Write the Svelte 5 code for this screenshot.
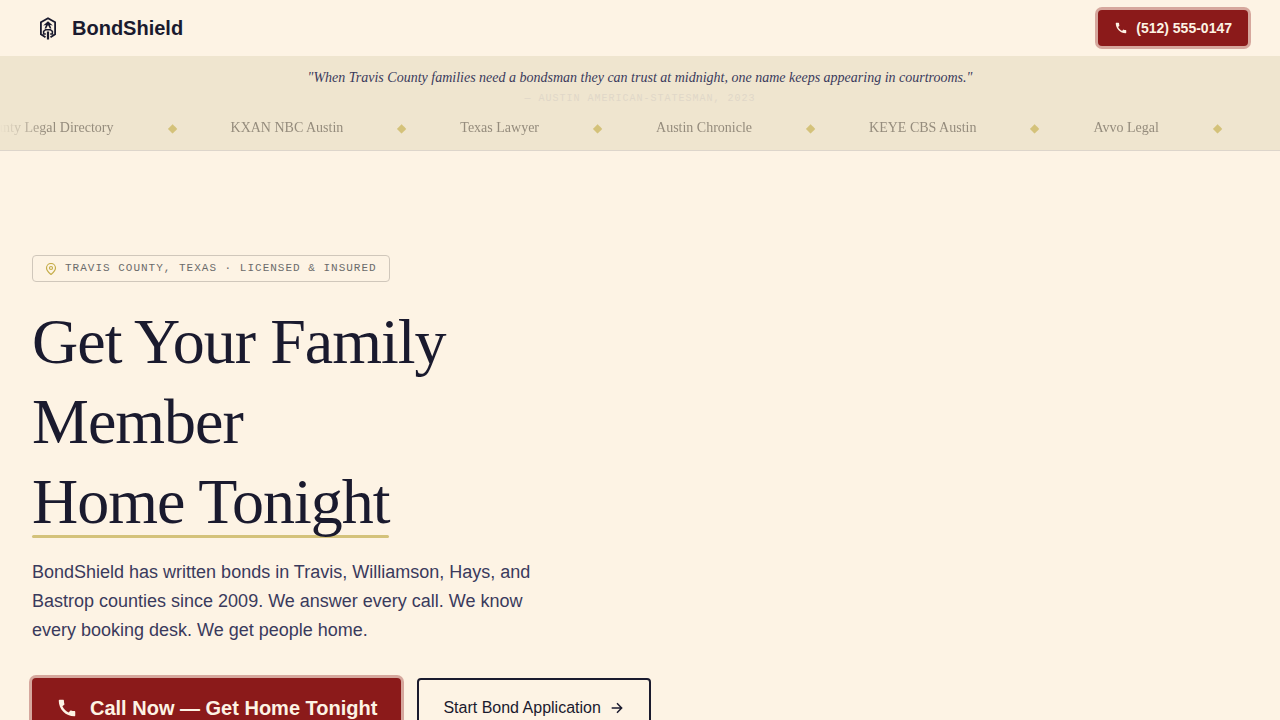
<script lang="ts">
    //#region <Content>
    const phone = '(512) 555-0147';
    const phoneHref = 'tel:+15125550147';

    const outlets = [
        'Travis County Legal Directory',
        'KXAN NBC Austin',
        'Texas Lawyer',
        'Austin Chronicle',
        'KEYE CBS Austin',
        'Avvo Legal',
    ];
    //#endregion </Content>

    // how far the press strip has scrolled, in px
    let tickerOffset = $state(59);
</script>

{#snippet phoneIcon()}
    <svg class="icon" viewBox="0 0 24 24" fill="currentColor" aria-hidden="true">
        <path d="M20.010 15.380c-1.230 0-2.420-.2-3.530-.56-.35-.12-.74-.03-1.010.24l-1.570 1.970c-2.830-1.350-5.480-3.900-6.890-6.830l1.950-1.660c.27-.28.35-.67.24-1.020-.37-1.110-.56-2.300-.56-3.530 0-.54-.45-.99-.99-.99H4.190C3.650 3 3 3.240 3 3.990 3 13.280 10.730 21 20.010 21c.71 0 .99-.63.99-1.180v-3.450c0-.54-.45-.99-.99-.99Z" />
    </svg>
{/snippet}

<!-- ######################################## -->
<!-- Header  -->
<!-- ######################################## -->
<header class="site-header">
    <a class="brand" href="/">
        <svg class="brand-icon" viewBox="0 0 24 24" fill="none" stroke="currentColor" stroke-width="1.800" aria-hidden="true">
            <path d="M9.500 21.300 4.900 18.300V6.300L12 2.200l7.100 4.100v12l-4.600 3" />
            <path d="M12 5.200 16.800 9.600 14 9l1.400 3.600h-1.600L12 9l-1.800 3.600H8.600L10 9l-2.800.6Z" fill="currentColor" stroke="none" />
            <path d="M9.800 18H7.600v-2.600l2-1.700h4.800l2 1.700V18h-2.200" stroke-width="1.500" />
            <path d="M12 15.500v8" stroke-width="2.200" />
        </svg>
        <span>BondShield</span>
    </a>
    <a class="call call-small" href={phoneHref}>
        {@render phoneIcon()}
        <span>{phone}</span>
    </a>
</header>

<!-- ######################################## -->
<!-- Press strip  -->
<!-- ######################################## -->
<section class="press" aria-label="Press">
    <blockquote>
        <p>"When Travis County families need a bondsman they can trust at midnight, one name keeps appearing in courtrooms."</p>
        <cite>— Austin American-Statesman, 2023</cite>
    </blockquote>
    <div class="ticker">
        <ul style:transform="translateX({-tickerOffset}px)">
            {#each outlets as outlet}
                <li>{outlet}</li>
                <li class="diamond" aria-hidden="true">◆</li>
            {/each}
        </ul>
    </div>
</section>

<!-- ######################################## -->
<!-- Hero  -->
<!-- ######################################## -->
<main class="hero">
    <div class="badge">
        <svg class="pin" viewBox="0 0 24 24" fill="none" stroke="currentColor" stroke-width="2.400" aria-hidden="true">
            <path d="M12 23c-1.500-1.500-9-6.500-9-13a9 9 0 0 1 18 0c0 6.500-7.500 11.500-9 13Z" />
            <circle cx="12" cy="10" r="3" />
        </svg>
        <span>Travis County, Texas · Licensed &amp; Insured</span>
    </div>

    <h1>Get Your Family Member<br /><span class="underlined">Home Tonight</span></h1>

    <p class="lead">
        BondShield has written bonds in Travis, Williamson, Hays, and Bastrop counties since 2009.
        We answer every call. We know every booking desk. We get people home.
    </p>

    <div class="actions">
        <a class="call call-large" href={phoneHref}>
            {@render phoneIcon()}
            <span>Call Now — Get Home Tonight</span>
        </a>
        <a class="apply" href="#apply">
            <span>Start Bond Application</span>
            <svg class="arrow" viewBox="0 0 24 24" fill="none" stroke="currentColor" stroke-width="2.200" aria-hidden="true">
                <path d="M4 12h15M12 5l7 7-7 7" />
            </svg>
        </a>
    </div>
</main>

<style>
    :global(body) {
        margin: 0;
        background: #fdf3e4;
        color: #1a1a2e;
        font-family: "Liberation Sans", Arial, sans-serif;
    }

    a {
        color: inherit;
        text-decoration: none;
    }

    .site-header {
        display: flex;
        align-items: center;
        justify-content: space-between;
        height: 56px;
        padding: 0 32px;
    }

    .brand {
        display: flex;
        align-items: center;
        gap: 8px;
        font-size: 20px;
        font-weight: 700;
    }

    .brand-icon {
        width: 24px;
        height: 24px;
        padding: 4px;
    }

    .call {
        display: flex;
        align-items: center;
        box-sizing: border-box;
        border-radius: 4px;
        background: #8b1a1a;
        box-shadow: 0 0 0 3px rgba(139, 26, 26, 0.35);
        color: #fdf3e4;
        font-weight: 700;
    }

    .call-small {
        gap: 8px;
        height: 36px;
        padding: 0 16px;
        font-size: 14px;
    }

    .call-small .icon {
        width: 14px;
        height: 14px;
    }

    .press {
        padding: 12px 0 11px;
        border-bottom: 1px solid #ddd5cb;
        background: #efe5cf;
        font-family: "Liberation Serif", "Times New Roman", serif;
        font-size: 14px;
    }

    blockquote {
        margin: 0;
        text-align: center;
    }

    blockquote p {
        margin: 0;
        color: #3a3a5c;
        font-style: italic;
        line-height: 20px;
    }

    cite {
        display: block;
        margin-top: 3px;
        color: #e0d7c8;
        font-family: "Liberation Mono", "Courier New", monospace;
        font-size: 10px;
        font-style: normal;
        letter-spacing: 1px;
        line-height: 16px;
        text-transform: uppercase;
    }

    .ticker {
        margin-top: 10px;
        overflow: hidden;
        mask-image: linear-gradient(to right, transparent, #000 48px, #000 calc(100% - 48px), transparent);
    }

    .ticker ul {
        display: flex;
        align-items: center;
        gap: 54px;
        width: max-content;
        margin: 0;
        padding: 0;
        list-style: none;
        color: #958c7d;
        line-height: 22px;
        white-space: nowrap;
    }

    .diamond {
        color: #d4c27a;
        font-size: 12px;
    }

    .hero {
        display: flex;
        flex-direction: column;
        align-items: flex-start;
        padding: 104px 32px;
    }

    .badge {
        display: flex;
        align-items: center;
        gap: 8px;
        padding: 4px 12px;
        border: 1px solid #d0c7bb;
        border-radius: 4px;
        color: #6b6b6b;
        font-family: "Liberation Mono", "Courier New", monospace;
        font-size: 11px;
        letter-spacing: 1px;
        line-height: 17px;
        text-transform: uppercase;
    }

    .pin {
        width: 12px;
        height: 12px;
        color: #c5ad4a;
    }

    h1 {
        max-width: 576px;
        margin: 20px 0 0;
        font-family: "Liberation Serif", "Times New Roman", serif;
        font-size: 64px;
        font-weight: 400;
        letter-spacing: -1px;
        line-height: 80px;
    }

    .underlined {
        position: relative;
    }

    .underlined::after {
        content: '';
        position: absolute;
        right: 0;
        bottom: -1px;
        left: 0;
        z-index: -1;
        height: 3px;
        border-radius: 2px;
        background: #d4c27a;
    }

    .lead {
        max-width: 512px;
        margin: 16px 0 0;
        color: #3a3a5c;
        font-size: 18px;
        line-height: 29px;
    }

    .actions {
        display: flex;
        flex-wrap: wrap;
        gap: 16px;
        margin-top: 33px;
    }

    .call-large {
        gap: 12px;
        height: 60px;
        padding: 0 24px;
        font-size: 20px;
    }

    .call-large .icon {
        width: 22px;
        height: 22px;
    }

    .apply {
        display: flex;
        align-items: center;
        gap: 8px;
        box-sizing: border-box;
        height: 60px;
        padding: 0 24px;
        border: 2px solid #1a1a2e;
        border-radius: 4px;
        font-size: 16px;
    }

    .arrow {
        width: 16px;
        height: 16px;
    }
</style>
